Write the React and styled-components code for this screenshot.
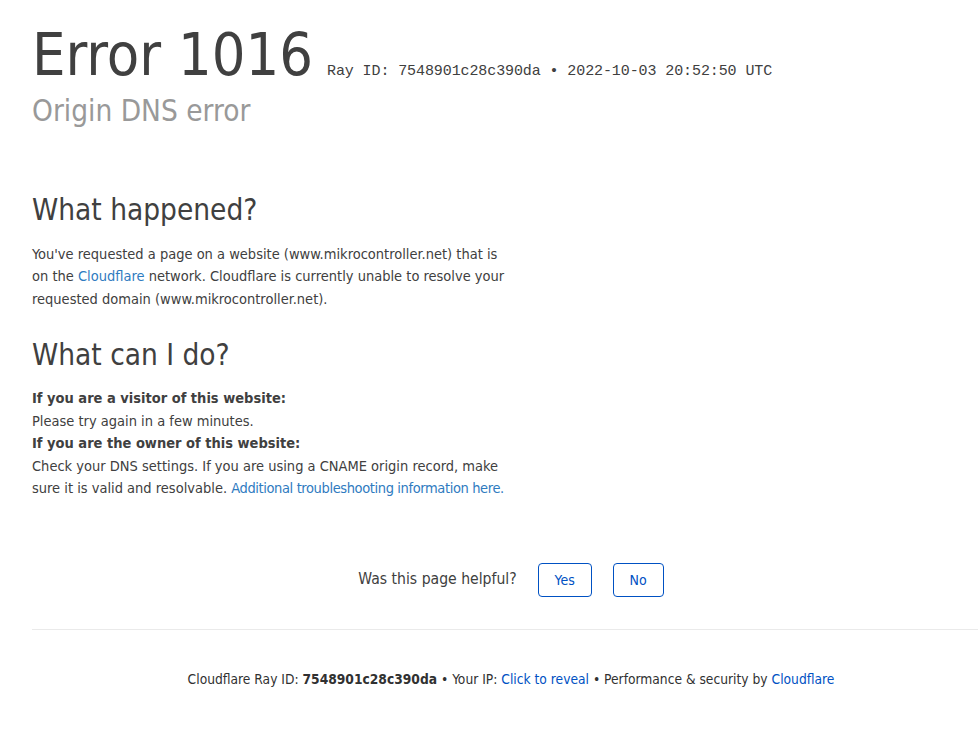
import React from 'react';
import styled, {createGlobalStyle} from "styled-components";

const RAY_ID = '7548901c28c390da';

const GlobalStyle = createGlobalStyle`
    html, body {
        margin: 0;
        padding: 0;
        background: #fff;
    }
    body {
        font-family: "DejaVu Sans Condensed", "Open Sans", sans-serif;
        font-size: 15px;
        line-height: 1.5;
        color: #404040;
    }
`;

const Wrapper = styled.div`
    padding: 20px 0 0 32px;
`;

const Header = styled.header`
    margin-bottom: 62px;
`;

const TitleRow = styled.div`
    display: flex;
    align-items: baseline;
    gap: 14px;
`;

const Title = styled.h1`
    margin: 0;
    font-size: 59px;
    font-weight: 400;
    line-height: 1.2;
    color: #404040;
`;

const RayInfo = styled.span`
    font-family: "Liberation Mono", monospace;
    font-size: 15px;
    letter-spacing: -0.1px;
    color: #404040;
`;

const Subtitle = styled.h2`
    margin: 3px 0 0;
    font-size: 29.5px;
    font-weight: 400;
    line-height: 1.2;
    color: #999;
`;

const Columns = styled.div`
    display: grid;
    grid-template-columns: 1fr 1fr;
`;

const Column = styled.section``;

const Heading = styled.h2`
    margin: 0 0 13px;
    font-size: 29.5px;
    font-weight: 400;
    line-height: 1.3;
    color: #404040;
`;

const Text = styled.p`
    margin: 0 0 ${({last}) => last ? 23 : 26}px;
    font-size: 14.5px;
    line-height: 22.5px;
`;

const Link = styled.a`
    color: ${({strong}) => strong ? '#0051c3' : '#2f7bbf'};
    text-decoration: none;
    ${({tight}) => tight && "letter-spacing: -0.38px;"}
`;

const Feedback = styled.div`
    display: flex;
    align-items: center;
    justify-content: center;
    gap: 21px;
    margin-top: 40px;
    padding: 0 0 32px 12px;
    border-bottom: 1px solid #eaeaea;
    font-size: 15.6px;
    color: #404040;
`;

const Button = styled.button`
    width: ${({wide}) => wide}px;
    height: 34px;
    border: 1px solid #0051c3;
    border-radius: 4px;
    background: #fff;
    color: #0051c3;
    font-family: inherit;
    font-size: 14px;
    cursor: pointer;
`;

const Footer = styled.footer`
    padding: 39px 0 38px 12px;
    text-align: center;
    font-size: 13.7px;
    color: #313131;
`;

const App = () => (
    <>
        <GlobalStyle/>
        <Wrapper>
            <Header>
                <TitleRow>
                    <Title>Error 1016</Title>
                    <RayInfo>Ray ID: {RAY_ID} &bull; 2022-10-03 20:52:50 UTC</RayInfo>
                </TitleRow>
                <Subtitle>Origin DNS error</Subtitle>
            </Header>
            <Columns>
                <Column>
                    <Heading>What happened?</Heading>
                    <Text>
                        You've requested a page on a website (www.mikrocontroller.net) that is on
                        the <Link href="#">Cloudflare</Link> network. Cloudflare is currently unable
                        to resolve your requested domain (www.mikrocontroller.net).
                    </Text>
                    <Heading>What can I do?</Heading>
                    <Text last>
                        <strong>If you are a visitor of this website:</strong><br/>
                        Please try again in a few minutes.<br/>
                        <strong>If you are the owner of this website:</strong><br/>
                        Check your DNS settings. If you are using a CNAME origin record, make sure it is
                        valid and resolvable. <Link tight href="#">Additional troubleshooting information here.</Link>
                    </Text>
                </Column>
                <Column/>
            </Columns>
            <Feedback>
                <span>Was this page helpful?</span>
                <Button wide={54}>Yes</Button>
                <Button wide={51}>No</Button>
            </Feedback>
            <Footer>
                Cloudflare Ray ID: <strong>{RAY_ID}</strong> &bull; Your IP: <Link strong href="#">Click to reveal</Link> &bull; Performance &amp; security by <Link strong href="#">Cloudflare</Link>
            </Footer>
        </Wrapper>
    </>
);

export default App;
